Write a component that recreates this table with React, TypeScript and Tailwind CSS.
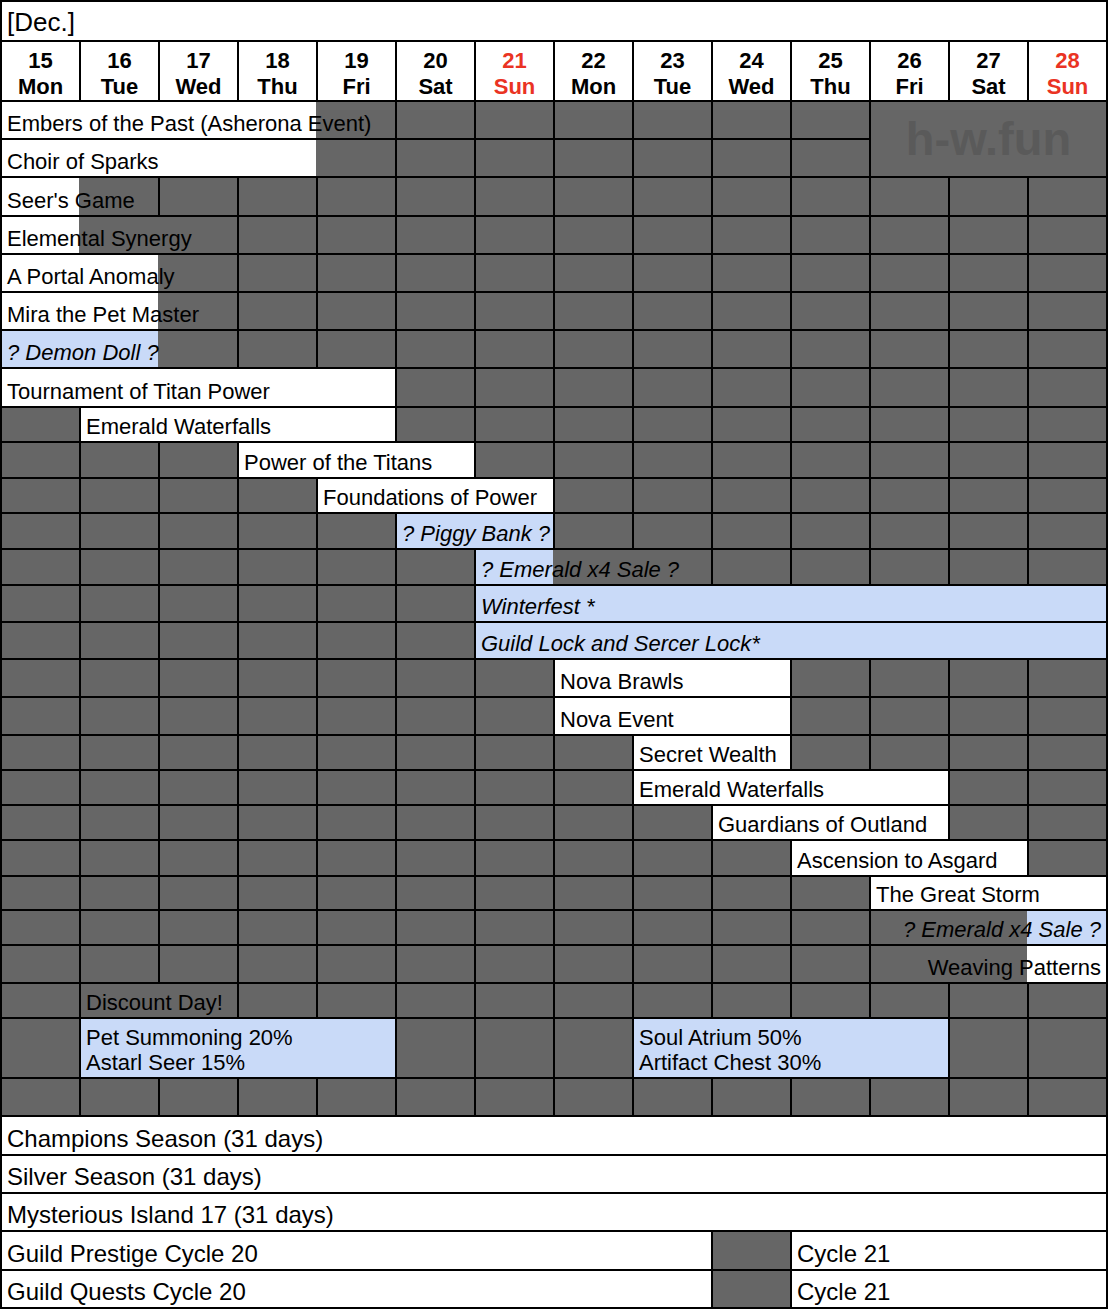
import clsx from "clsx";

type Seg = {
  s: number;
  c: "w" | "g" | "b";
  t?: string;
  lines?: string[];
  i?: boolean; // italic
  o?: boolean; // text spills over to the right
  m?: boolean; // hides the border on its left
  r?: boolean; // right aligned, spills to the left
  big?: boolean;
};

const spanCls: Record<number, string> = {
  1: "col-span-1",
  2: "col-span-2",
  3: "col-span-3",
  4: "col-span-4",
  5: "col-span-5",
  6: "col-span-6",
  7: "col-span-7",
  8: "col-span-8",
  9: "col-span-9",
  10: "col-span-10",
  11: "col-span-11",
  12: "col-span-12",
  13: "col-span-13",
  14: "col-span-14",
};

const bgCls = {
  w: "bg-white",
  g: "bg-[#666666]",
  b: "bg-[#c9daf8]",
};

const g = (n: number): Seg[] => Array.from({ length: n }, () => ({ s: 1, c: "g" as const }));

const days = [
  { d: "15", w: "Mon" },
  { d: "16", w: "Tue" },
  { d: "17", w: "Wed" },
  { d: "18", w: "Thu" },
  { d: "19", w: "Fri" },
  { d: "20", w: "Sat" },
  { d: "21", w: "Sun", red: true },
  { d: "22", w: "Mon" },
  { d: "23", w: "Tue" },
  { d: "24", w: "Wed" },
  { d: "25", w: "Thu" },
  { d: "26", w: "Fri" },
  { d: "27", w: "Sat" },
  { d: "28", w: "Sun", red: true },
];

// rows after the watermark rows
const rows: Seg[][] = [
  [{ s: 1, c: "w", t: "Seer's Game", o: true }, { s: 1, c: "g", m: true }, ...g(12)],
  [{ s: 1, c: "w", t: "Elemental Synergy", o: true }, { s: 2, c: "g", m: true }, ...g(11)],
  [{ s: 2, c: "w", t: "A Portal Anomaly", o: true }, { s: 1, c: "g", m: true }, ...g(11)],
  [{ s: 2, c: "w", t: "Mira the Pet Master", o: true }, { s: 1, c: "g", m: true }, ...g(11)],
  [{ s: 2, c: "b", t: "? Demon Doll ?", i: true, o: true }, { s: 1, c: "g", m: true }, ...g(11)],
  [{ s: 5, c: "w", t: "Tournament of Titan Power" }, ...g(9)],
  [...g(1), { s: 4, c: "w", t: "Emerald Waterfalls" }, ...g(9)],
  [...g(3), { s: 3, c: "w", t: "Power of the Titans" }, ...g(8)],
  [...g(4), { s: 3, c: "w", t: "Foundations of Power" }, ...g(7)],
  [...g(5), { s: 2, c: "b", t: "? Piggy Bank ?", i: true }, ...g(7)],
  [...g(6), { s: 1, c: "b", t: "? Emerald x4 Sale ?", i: true, o: true }, { s: 2, c: "g", m: true }, ...g(5)],
  [...g(6), { s: 8, c: "b", t: "Winterfest *", i: true }],
  [...g(6), { s: 8, c: "b", t: "Guild Lock and Sercer Lock*", i: true }],
  [...g(7), { s: 3, c: "w", t: "Nova Brawls" }, ...g(4)],
  [...g(7), { s: 3, c: "w", t: "Nova Event" }, ...g(4)],
  [...g(8), { s: 2, c: "w", t: "Secret Wealth" }, ...g(4)],
  [...g(8), { s: 4, c: "w", t: "Emerald Waterfalls" }, ...g(2)],
  [...g(9), { s: 3, c: "w", t: "Guardians of Outland" }, ...g(2)],
  [...g(10), { s: 3, c: "w", t: "Ascension to Asgard" }, ...g(1)],
  [...g(11), { s: 3, c: "w", t: "The Great Storm" }],
  [...g(11), { s: 2, c: "g" }, { s: 1, c: "b", t: "? Emerald x4 Sale ?", i: true, r: true, m: true }],
  [...g(11), { s: 2, c: "g" }, { s: 1, c: "w", t: "Weaving Patterns", r: true, m: true }],
  [...g(1), { s: 2, c: "g", t: "Discount Day!" }, ...g(11)],
  [
    ...g(1),
    { s: 4, c: "b", lines: ["Pet Summoning 20%", "Astarl Seer 15%"] },
    ...g(3),
    { s: 4, c: "b", lines: ["Soul Atrium 50%", "Artifact Chest 30%"] },
    ...g(2),
  ],
  g(14),
  [{ s: 14, c: "w", t: "Champions Season (31 days)", big: true }],
  [{ s: 14, c: "w", t: "Silver Season (31 days)", big: true }],
  [{ s: 14, c: "w", t: "Mysterious Island 17 (31 days)", big: true }],
  [{ s: 9, c: "w", t: "Guild Prestige Cycle 20", big: true }, ...g(1), { s: 4, c: "w", t: "Cycle 21", big: true }],
  [{ s: 9, c: "w", t: "Guild Quests Cycle 20", big: true }, ...g(1), { s: 4, c: "w", t: "Cycle 21", big: true }],
];

function Cell({ seg }: { seg: Seg }) {
  return (
    <div
      className={clsx(
        spanCls[seg.s],
        bgCls[seg.c],
        "flex min-w-0 px-[5px] pb-[2px] whitespace-nowrap",
        seg.lines ? "flex-col justify-end" : "items-end",
        seg.o && "relative z-10",
        seg.m && "-ml-[2px]",
        seg.r && "justify-end relative z-10",
        seg.i && "italic",
        seg.big && "text-[24px] leading-[27px]"
      )}
    >
      {seg.t && <span className="shrink-0">{seg.t}</span>}
      {seg.lines && seg.lines.map((l) => <span key={l}>{l}</span>)}
    </div>
  );
}

export default function App() {
  return (
    <div className="w-[1108px] bg-white font-['Liberation_Sans',Arial,sans-serif] text-black">
      <div className="grid grid-cols-[repeat(14,77px)] grid-rows-[38px_58px_36px_36px_37px_36px_36px_36px_36px_37px_33px_34px_33px_34px_34px_35px_35px_36px_36px_33px_33px_33px_34px_32px_33px_36px_33px_58px_36px_37px_36px_36px_37px_36px] gap-[2px] bg-black p-[2px] text-[22px] leading-[25px]">
        {/* month title */}
        <div className="col-span-14 flex items-end bg-white px-[5px] pb-[3px] text-[26px] leading-[29px]">[Dec.]</div>

        {/* day headers */}
        {days.map((day) => (
          <div
            key={day.d}
            className={clsx(
              "flex flex-col items-center justify-center bg-white pt-[5px] font-bold leading-[26px]",
              day.red ? "text-[#ea3323]" : "text-black"
            )}
          >
            <span>{day.d}</span>
            <span>{day.w}</span>
          </div>
        ))}

        {/* first two rows + watermark block */}
        <Cell seg={{ s: 4, c: "w", t: "Embers of the Past (Asherona Event)", o: true }} />
        <Cell seg={{ s: 1, c: "g", m: true }} />
        {g(6).map((seg, i) => (
          <Cell key={i} seg={seg} />
        ))}
        <div className="col-span-3 row-span-2 flex items-center justify-center bg-[#666666] pb-[2px] text-[47px] font-bold text-[#5a5a5a]">
          h-w.fun
        </div>
        <Cell seg={{ s: 4, c: "w", t: "Choir of Sparks" }} />
        <Cell seg={{ s: 1, c: "g", m: true }} />
        {g(6).map((seg, i) => (
          <Cell key={i} seg={seg} />
        ))}

        {rows.map((row, ri) => row.map((seg, si) => <Cell key={`${ri}-${si}`} seg={seg} />))}
      </div>
    </div>
  );
}
